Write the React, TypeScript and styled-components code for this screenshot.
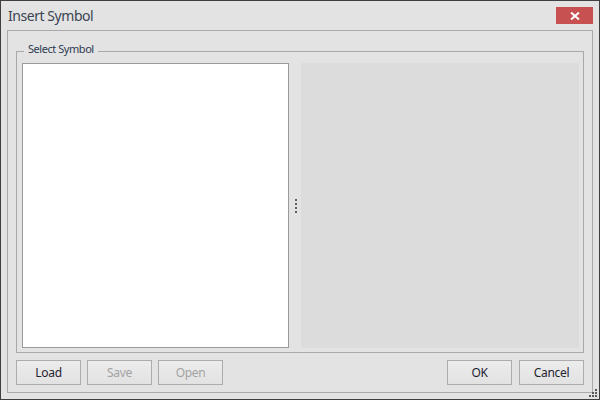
import React from "react";
import styled, { createGlobalStyle } from "styled-components";

const Global = createGlobalStyle`
  html, body { margin: 0; padding: 0; background: #e3e3e3; }
  * { box-sizing: border-box; }
`;

const Window = styled.div`
  position: relative;
  width: 600px;
  height: 400px;
  background: #e3e3e3;
  border: 1px solid #3f3f3f;
  display: flex;
  flex-direction: column;
  font-family: "Noto Sans", "Open Sans", sans-serif;
`;

const TitleBar = styled.div`
  height: 29px;
  display: flex;
  align-items: flex-start;
  justify-content: space-between;
  padding: 0 6px 0 7px;
`;

const Title = styled.div`
  font-size: 14px;
  letter-spacing: -0.45px;
  color: #3b4452;
  margin-top: 5px;
  line-height: 20px;
`;

const CloseButton = styled.div`
  width: 37px;
  height: 17px;
  margin-top: 6px;
  background: #c75050;
  display: flex;
  align-items: center;
  justify-content: center;
`;

const Body = styled.div`
  flex: 1;
  margin: 0 6px 6px 6px;
  border: 1px solid #a9a9a9;
  padding: 20px 8px 7px 8px;
  display: flex;
  flex-direction: column;
`;

const Group = styled.div`
  position: relative;
  height: 302px;
  border: 1px solid #a9a9a9;
  padding: 11px 4px 4px 5px;
  display: flex;
`;

const GroupLabel = styled.span`
  position: absolute;
  top: -11px;
  left: 7px;
  padding: 0 4px;
  background: #e3e3e3;
  font-size: 11px;
  letter-spacing: -0.45px;
  line-height: 16px;
  color: #2e3a50;
`;

const List = styled.div`
  width: 267px;
  background: #ffffff;
  border: 1px solid #9a9a9a;
`;

const Splitter = styled.div`
  width: 12px;
  display: flex;
  flex-direction: column;
  align-items: center;
  justify-content: center;
  gap: 2px;
  padding-left: 1px;
`;

const Dot = styled.span`
  width: 2px;
  height: 2px;
  background: #5f5f5f;
`;

const Preview = styled.div`
  width: 278px;
  background: #dcdcdc;
`;

const ButtonRow = styled.div`
  margin-top: 7px;
  display: flex;
  align-items: center;
`;

const ButtonGroup = styled.div<{ $gap: number }>`
  display: flex;
  gap: ${(p) => p.$gap}px;
`;

const Spacer = styled.div`
  flex: 1;
`;

const Button = styled.div<{ $disabled?: boolean }>`
  width: 65px;
  height: 25px;
  border: 1px solid #acacac;
  background: linear-gradient(#ececec, #e2e2e2);
  display: flex;
  align-items: center;
  justify-content: center;
  font-size: 12px;
  letter-spacing: -0.3px;
  color: ${(p) => (p.$disabled ? "#a2a2a2" : "#1f2430")};
`;

const Grip = styled.svg`
  position: absolute;
  right: 1px;
  bottom: 1px;
`;

export default function App() {
  return (
    <>
      <Global />
      <Window>
        <TitleBar>
          <Title>Insert Symbol</Title>
          <CloseButton>
            <svg width="10" height="8" viewBox="0 0 10 8">
              <path d="M1 0.5 L9 7.5 M9 0.5 L1 7.5" stroke="#ffffff" strokeWidth="2" />
            </svg>
          </CloseButton>
        </TitleBar>
        <Body>
          <Group>
            <GroupLabel>Select Symbol</GroupLabel>
            <List />
            <Splitter>
              <Dot />
              <Dot />
              <Dot />
              <Dot />
            </Splitter>
            <Preview />
          </Group>
          <ButtonRow>
            <ButtonGroup $gap={6}>
              <Button>Load</Button>
              <Button $disabled>Save</Button>
              <Button $disabled>Open</Button>
            </ButtonGroup>
            <Spacer />
            <ButtonGroup $gap={7}>
              <Button>OK</Button>
              <Button>Cancel</Button>
            </ButtonGroup>
          </ButtonRow>
        </Body>
        <Grip width="10" height="10" viewBox="0 0 10 10">
          <rect x="7" y="1" width="2" height="2" fill="#5a5a5a" />
          <rect x="4" y="4" width="2" height="2" fill="#5a5a5a" />
          <rect x="7" y="4" width="2" height="2" fill="#5a5a5a" />
          <rect x="1" y="7" width="2" height="2" fill="#5a5a5a" />
          <rect x="4" y="7" width="2" height="2" fill="#5a5a5a" />
          <rect x="7" y="7" width="2" height="2" fill="#5a5a5a" />
        </Grip>
      </Window>
    </>
  );
}
